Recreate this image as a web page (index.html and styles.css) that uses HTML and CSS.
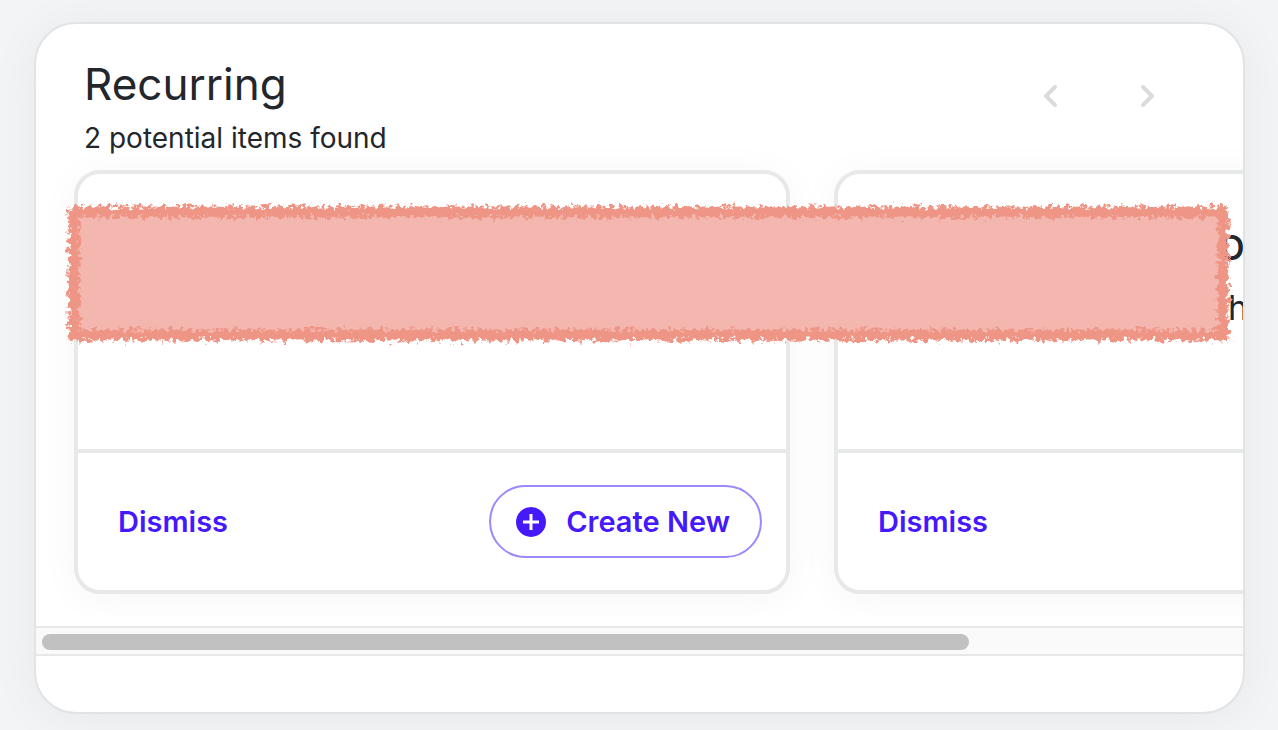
FILE: index.html
```html
<!DOCTYPE html>
<html lang="en">
<head>
<meta charset="UTF-8">
<meta name="viewport" content="width=device-width, initial-scale=1.0">
<title>Recurring</title>
<link rel="stylesheet" href="styles.css">
</head>
<body>
    <main class="panel">
        <header class="panel-header">
            <div>
                <h1>Recurring</h1>
                <p>2 potential items found</p>
            </div>
            <nav class="pager">
                <button type="button" aria-label="Previous">
                    <svg width="16" height="24" viewBox="0 0 16 24"><path d="M13 3 L4 12 L13 21"/></svg>
                </button>
                <button type="button" aria-label="Next">
                    <svg width="16" height="24" viewBox="0 0 16 24"><path d="M4 3 L13 12 L4 21"/></svg>
                </button>
            </nav>
        </header>

        <div class="items">
            <article class="item">
                <div class="item-body"></div>
                <div class="item-actions">
                    <button type="button" class="dismiss">Dismiss</button>
                    <button type="button" class="create">
                        <svg width="30" height="30" viewBox="0 0 30 30"><circle cx="15" cy="15" r="15"/><path d="M15 7V23M7 15H23"/></svg>
                        Create New
                    </button>
                </div>
            </article>
            <article class="item">
                <div class="item-body">
                    <p class="item-name">D</p>
                    <p class="item-period">h</p>
                </div>
                <div class="item-actions">
                    <button type="button" class="dismiss">Dismiss</button>
                </div>
            </article>
        </div>

        <div class="scroll-track"><div class="scroll-thumb"></div></div>

        <!-- crayon style block that hides the item details -->
        <svg class="redaction" aria-hidden="true">
            <defs>
                <filter id="crayon" x="-20" y="-20" width="1400" height="200" filterUnits="userSpaceOnUse" color-interpolation-filters="sRGB">
                    <feTurbulence type="fractalNoise" baseFrequency="0.22" numOctaves="3" seed="7" result="noise"/>
                    <feDisplacementMap in="SourceGraphic" in2="noise" scale="14" xChannelSelector="R" yChannelSelector="G"/>
                </filter>
            </defs>
            <rect class="redaction-fill" width="100%" height="100%"/>
            <rect class="redaction-edge" width="100%" height="100%" filter="url(#crayon)"/>
        </svg>
    </main>
</body>
</html>
```
FILE: styles.css
```css
* {
    box-sizing: border-box;
}
body {
    font-family: Inter, "Liberation Sans", sans-serif;
    font-size: 28px;
    margin: 0;
    padding: 22px 33px 16px 34px;
    background-color: #f3f4f6;
    color: #23262b;
}
h1, p {
    margin: 0;
}
button {
    font: inherit;
    padding: 0;
    border: none;
    background: none;
    cursor: pointer;
}
.panel {
    position: relative;
    padding-bottom: 56px;
    border: 2px solid #e1e3e4;
    border-radius: 42px;
    background-color: #fff;
    box-shadow: 0 4px 50px rgba(0, 0, 0, 0.05);
    overflow: hidden;
}
.panel-header {
    display: flex;
    justify-content: space-between;
    padding: 32px 48px 0;
}
h1 {
    font-size: 44px;
    font-weight: 400;
    line-height: 56px;
}
.panel-header p {
    line-height: 52px;
}
.pager {
    display: flex;
    height: 84px;
}
.pager button {
    width: 97px;
}
.pager path {
    fill: none;
    stroke: #dadcdc;
    stroke-width: 4;
    stroke-linecap: round;
    stroke-linejoin: round;
}
.items {
    display: flex;
    gap: 44px;
    margin-top: -22px;
    padding: 28px 38px 22px;
    overflow: hidden;
}
.item {
    flex: 0 0 716px;
    border: 4px solid #e7e9e9;
    border-radius: 26px;
    background-color: #fff;
    box-shadow: 0 4px 40px rgba(0, 0, 0, 0.04);
}
.item-body {
    height: 275px;
    padding: 52px 40px 0 340px;
}
.item-name,
.item-period {
    font-size: 34px;
    line-height: 44px;
}
.item-name {
    padding-left: 42px;
    font-weight: 600;
}
.item-period {
    padding: 16px 0 0 50px;
}
.item-actions {
    display: flex;
    justify-content: space-between;
    align-items: center;
    height: 141px;
    padding: 0 24px 0 40px;
    border-top: 4px solid #e7e9e9;
}
.dismiss,
.create {
    color: #4519fb;
    font-size: 29px;
    font-weight: 600;
}
.create {
    display: flex;
    align-items: center;
    gap: 20px;
    height: 73px;
    padding: 0 30px 0 25px;
    border: 2px solid #9f88fb;
    border-radius: 37px;
}
.create circle {
    fill: #4519fb;
}
.create path {
    stroke: #fff;
    stroke-width: 3;
}
.scroll-track {
    height: 30px;
    margin-top: 10px;
    padding: 6px;
    border: solid #e8e8e8;
    border-width: 2px 0;
    background-color: #fafafa;
}
.scroll-thumb {
    width: 77.6%;
    height: 16px;
    border-radius: 8px;
    background-color: #c1c1c1;
}
.redaction {
    position: absolute;
    top: 188px;
    left: 38px;
    width: calc(100% - 58px);
    height: 123px;
    overflow: visible;
}
.redaction-fill {
    fill: #f3b7b0;
}
.redaction-edge {
    fill: none;
    stroke: #ef9585;
    stroke-width: 11;
}
```
